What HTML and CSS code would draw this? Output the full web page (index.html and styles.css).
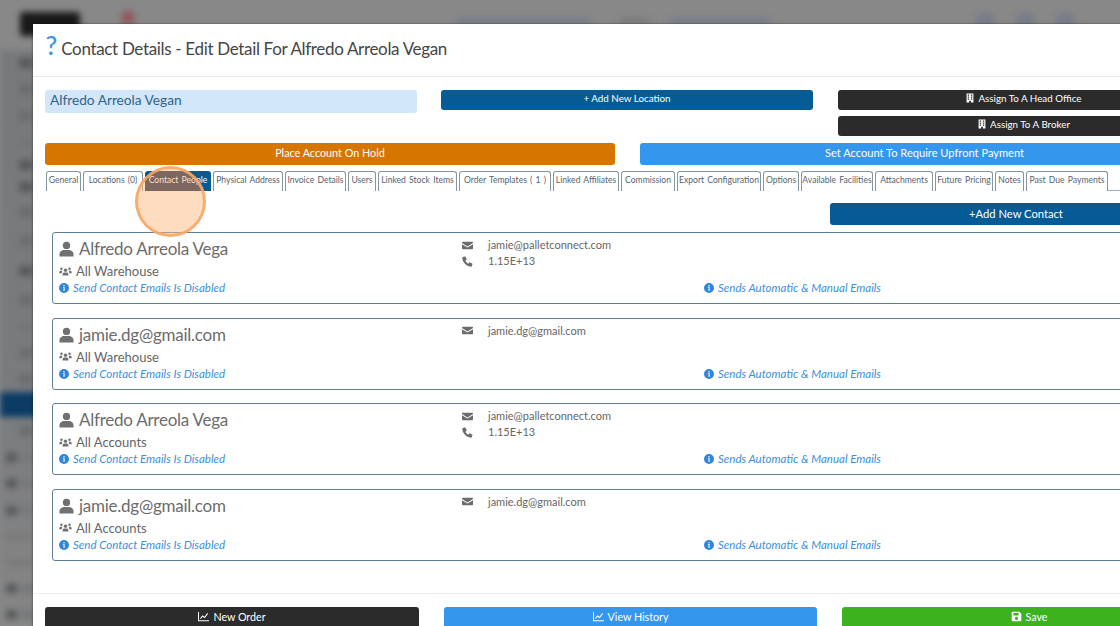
FILE: index.html
```html
<!DOCTYPE html>
<html lang="en">
<head>
<meta charset="utf-8">
<title>Contact Details</title>
<link rel="stylesheet" href="styles.css">
</head>
<body>
<svg width="0" height="0" class="defs">
  <symbol id="i-user" viewBox="0 0 16 16"><circle cx="8" cy="4.2" r="3.9"/><path d="M.5 16v-2.200C.5 10.700 3.100 9 5.500 9h5c2.400 0 5 1.700 5 4.800V16z"/></symbol>
  <symbol id="i-users" viewBox="0 0 20 16"><circle cx="10" cy="6" r="2.600"/><circle cx="3.800" cy="3.800" r="1.900"/><circle cx="16.200" cy="3.800" r="1.900"/><path d="M5.500 14v-1.500C5.500 10.500 7 9.500 8.500 9.500h3c1.500 0 3 1 3 3V14z"/><path d="M0.500 10.500V9c0-1.200 1-2.200 2.200-2.200h2.300C5 8 4.500 9 4.200 10.500zM19.500 10.500V9c0-1.200-1-2.200-2.200-2.200H15c0 1.200.5 2.200.8 3.700z"/></symbol>
  <symbol id="i-mail" viewBox="0 0 16 16"><path d="M1 2.500h14c.6 0 1 .4 1 1v.7L8 9.300 0 4.200v-.7c0-.6.400-1 1-1z"/><path d="M0 6l8 5 8-5v6.500c0 .6-.4 1-1 1H1c-.6 0-1-.4-1-1z"/></symbol>
  <symbol id="i-phone" viewBox="0 0 16 16"><path d="M3.800.7L1.300 1.500C.6 1.800.3 2.300.4 3c.6 6.500 5.800 11.900 12.500 12.600.7.100 1.200-.3 1.400-.9l.9-2.600c.2-.5 0-1-.5-1.300l-3-1.500c-.4-.2-.9-.1-1.200.3l-1.200 1.500C6.900 9.900 5.900 8.800 4.900 6.900l1.500-1.200c.4-.3.500-.8.300-1.200L5.100 1.200C4.800.7 4.300.5 3.800.7z"/></symbol>
  <symbol id="i-info" viewBox="0 0 16 16"><path fill-rule="evenodd" d="M8 0a8 8 0 1 1 0 16A8 8 0 0 1 8 0zM6.600 6.500v1.300h.8v3H6.500v1.300h3.200v-1.300h-.8V6.500zM8 3a1.200 1.200 0 1 0 0 2.400A1.200 1.200 0 0 0 8 3z"/></symbol>
  <symbol id="i-chart" viewBox="0 0 16 16"><path d="M0 1.500h1.500v11.800H16v1.500H0z"/><path d="M3 10.500l3.500-4.300 3 2.200L13.500 3l1.200 1-5 6.500-3-2.200-2.700 3.500z"/></symbol>
  <symbol id="i-building" viewBox="0 0 14 16"><path fill-rule="evenodd" d="M1 0h12v16H8.500v-3h-3v3H1zM3 2v2h2.500V2zm5.500 0v2H11V2zM3 5.500v2h2.500v-2zm5.500 0v2H11v-2zM3 9v2h2.500V9zm5.500 0v2H11V9z"/></symbol>
  <symbol id="i-save" viewBox="0 0 16 16"><path fill-rule="evenodd" d="M2 1h10l3 3v9.500c0 .8-.7 1.500-1.500 1.500h-11C1.700 15 1 14.300 1 13.500v-11C1 1.700 1.200 1 2 1zm1.500 2v3.500h7.500V3zM8 8.500a2.300 2.300 0 1 0 0 4.600 2.300 2.300 0 0 0 0-4.600z"/></symbol>
</svg>

<div class="backdrop">
  <div class="bd-top">
    <span class="bd-logo"></span><span class="bd-badge"></span>
    <span class="bd-crumb bd-c1"></span><span class="bd-crumb bd-c2"></span><span class="bd-crumb bd-c3"></span>
    <span class="bd-dot bd-d1"></span><span class="bd-dot"></span><span class="bd-dot"></span>
  </div>
  <div class="bd-side">
    <span class="bd-item bd-dark"></span><span class="bd-item"></span><span class="bd-item"></span><span class="bd-item bd-light"></span>
    <span class="bd-item bd-dark"></span><span class="bd-item bd-dark"></span><span class="bd-item"></span><span class="bd-item"></span>
    <span class="bd-item bd-dark"></span><span class="bd-item"></span><span class="bd-item bd-light"></span><span class="bd-item"></span>
    <span class="bd-item"></span>
    <span class="bd-active"></span>
    <span class="bd-item"></span>
    <span class="bd-sub bd-dark"></span><span class="bd-sub bd-dark"></span><span class="bd-sub bd-dark"></span>
    <span class="bd-sub bd-light"></span><span class="bd-sub bd-light"></span><span class="bd-sub bd-dark"></span><span class="bd-sub bd-dark"></span>
  </div>
</div>

<main class="modal">
  <header class="modal-head">
    <span class="q">?</span>
    <h1>Contact Details - Edit Detail For Alfredo Arreola Vegan</h1>
  </header>

  <section class="modal-body">
    <div class="top-row">
      <input class="name-input" type="text" value="Alfredo Arreola Vegan">
      <button class="btn navy small add-loc">+ Add New Location</button>
      <div class="assign">
        <button class="btn dark small"><svg class="ic-b"><use href="#i-building"/></svg> Assign To A Head Office</button>
        <button class="btn dark small"><svg class="ic-b"><use href="#i-building"/></svg> Assign To A Broker</button>
      </div>
    </div>

    <div class="hold-row">
      <button class="btn orange mid hold">Place Account On Hold</button>
      <button class="btn blue mid upfront">Set Account To Require Upfront Payment</button>
    </div>

    <nav class="tabs">
      <a class="tab">General</a>
      <a class="tab">Locations (0)</a>
      <a class="tab active">Contact People</a>
      <a class="tab">Physical Address</a>
      <a class="tab">Invoice Details</a>
      <a class="tab">Users</a>
      <a class="tab">Linked Stock Items</a>
      <a class="tab">Order Templates ( 1 )</a>
      <a class="tab">Linked Affiliates</a>
      <a class="tab">Commission</a>
      <a class="tab">Export Configuration</a>
      <a class="tab">Options</a>
      <a class="tab">Available Facilities</a>
      <a class="tab">Attachments</a>
      <a class="tab">Future Pricing</a>
      <a class="tab">Notes</a>
      <a class="tab">Past Due Payments</a>
      <span class="tab-rest"></span>
    </nav>

    <div class="add-row">
      <button class="btn navy mid add-contact">+Add New Contact</button>
    </div>

    <div class="cards">
      <article class="card">
        <div class="c-left">
          <div class="c-name"><svg class="ic-user"><use href="#i-user"/></svg>Alfredo Arreola Vega</div>
          <div class="c-group"><svg class="ic-users"><use href="#i-users"/></svg>All Warehouse</div>
        </div>
        <div class="c-mid">
          <div class="c-line"><svg class="ic-s"><use href="#i-mail"/></svg>jamie@palletconnect.com</div>
          <div class="c-line"><svg class="ic-s"><use href="#i-phone"/></svg>1.15E+13</div>
        </div>
        <div class="c-note c-note-l"><svg class="ic-i"><use href="#i-info"/></svg>Send Contact Emails Is Disabled</div>
        <div class="c-note c-note-r"><svg class="ic-i"><use href="#i-info"/></svg>Sends Automatic &amp; Manual Emails</div>
      </article>

      <article class="card">
        <div class="c-left">
          <div class="c-name"><svg class="ic-user"><use href="#i-user"/></svg>jamie.dg@gmail.com</div>
          <div class="c-group"><svg class="ic-users"><use href="#i-users"/></svg>All Warehouse</div>
        </div>
        <div class="c-mid">
          <div class="c-line"><svg class="ic-s"><use href="#i-mail"/></svg>jamie.dg@gmail.com</div>
        </div>
        <div class="c-note c-note-l"><svg class="ic-i"><use href="#i-info"/></svg>Send Contact Emails Is Disabled</div>
        <div class="c-note c-note-r"><svg class="ic-i"><use href="#i-info"/></svg>Sends Automatic &amp; Manual Emails</div>
      </article>

      <article class="card">
        <div class="c-left">
          <div class="c-name"><svg class="ic-user"><use href="#i-user"/></svg>Alfredo Arreola Vega</div>
          <div class="c-group"><svg class="ic-users"><use href="#i-users"/></svg>All Accounts</div>
        </div>
        <div class="c-mid">
          <div class="c-line"><svg class="ic-s"><use href="#i-mail"/></svg>jamie@palletconnect.com</div>
          <div class="c-line"><svg class="ic-s"><use href="#i-phone"/></svg>1.15E+13</div>
        </div>
        <div class="c-note c-note-l"><svg class="ic-i"><use href="#i-info"/></svg>Send Contact Emails Is Disabled</div>
        <div class="c-note c-note-r"><svg class="ic-i"><use href="#i-info"/></svg>Sends Automatic &amp; Manual Emails</div>
      </article>

      <article class="card">
        <div class="c-left">
          <div class="c-name"><svg class="ic-user"><use href="#i-user"/></svg>jamie.dg@gmail.com</div>
          <div class="c-group"><svg class="ic-users"><use href="#i-users"/></svg>All Accounts</div>
        </div>
        <div class="c-mid">
          <div class="c-line"><svg class="ic-s"><use href="#i-mail"/></svg>jamie.dg@gmail.com</div>
        </div>
        <div class="c-note c-note-l"><svg class="ic-i"><use href="#i-info"/></svg>Send Contact Emails Is Disabled</div>
        <div class="c-note c-note-r"><svg class="ic-i"><use href="#i-info"/></svg>Sends Automatic &amp; Manual Emails</div>
      </article>
    </div>
  </section>

  <footer class="modal-foot">
    <button class="btn dark mid f1"><svg class="ic-c"><use href="#i-chart"/></svg> New Order</button>
    <button class="btn blue mid f2"><svg class="ic-c"><use href="#i-chart"/></svg> View History</button>
    <button class="btn green mid f3"><svg class="ic-c"><use href="#i-save"/></svg> Save</button>
  </footer>
</main>

<div class="click-ring"></div>
</body>
</html>
```
FILE: styles.css
```css
* { box-sizing: border-box; }
html, body { margin: 0; height: 100%; overflow: hidden; }
body { width: 1120px; height: 626px; background: #888; font-family: "Lato", "Liberation Sans", sans-serif; color: #444; position: relative; }
.defs { position: absolute; }
svg { fill: currentColor; flex: none; }

.backdrop { position: absolute; inset: 0; filter: blur(3px); overflow: hidden; }
.bd-top { display: flex; align-items: flex-start; height: 62px; padding: 12px 0 0 20px; }
.bd-logo { width: 60px; height: 24px; background: #191919; border-radius: 3px; flex: none; }
.bd-badge { width: 14px; height: 16px; background: #8f5a5e; border-radius: 50%; margin: -2px 0 0 41px; flex: none; }
.bd-crumb { height: 7px; background: #747b8a; margin-top: 6px; flex: none; }
.bd-c1 { width: 133px; margin-left: 322px; }
.bd-c2 { width: 30px; margin-left: 30px; background: #7a7a7c; }
.bd-c3 { width: 100px; margin-left: 20px; }
.bd-dot { width: 20px; height: 22px; background: #777c88; border-radius: 50%; margin: 0 0 0 20px; flex: none; }
.bd-d1 { margin-left: 205px; }
.bd-side { display: grid; width: 60px; height: 580px; background: linear-gradient(#77797b 0, #7a7b7d 60%, #868686 100%); grid-template-rows: 26px 26.5px 26px 26.5px 20.5px 22px 28.5px 30px 30px 27.5px 26px 26px 26.5px 25px 27.5px 25.5px 26.5px 27px 26.5px 25.5px 26px 26.5px; align-items: center; margin-top: -12px; padding-left: 19px; }
.bd-item { display: block; height: 10px; width: 14px; background: #6a6c6e; }
.bd-dark { background: #56585a; }
.bd-light { background: #747678; }
.bd-active { display: block; height: 25px; width: 70px; margin-left: -19px; background: linear-gradient(90deg, #0b3c66 70%, #2d5c82 85%, #0b3c66 100%); }
.bd-sub { display: block; height: 9px; width: 34px; margin-left: -13px; }
.bd-sub.bd-dark { background: linear-gradient(90deg, #56585a 0 11px, transparent 11px 14px, #76787a 14px); }
.bd-sub.bd-light { background: #777; height: 5px; }

.modal { position: absolute; left: 32.5px; top: 24px; width: 1200px; height: 640px; background: #fff; display: flex; flex-direction: column; box-shadow: 0 0 2px rgba(0, 0, 0, .55); }
.modal-head { height: 53px; border-bottom: 1px solid #e9ecef; display: flex; align-items: center; padding: 0 0 3px 13px; gap: 4px; }
.q { color: #3f96e6; font-size: 26px; font-weight: 500; line-height: 1; margin-top: -7px; }
h1 { margin: 0; font-size: 17px; font-weight: 400; letter-spacing: -.33px; color: #454545; }
.modal-body { padding: 12.5px 0 0 12.5px; flex: 1; }

.btn { border: 0; border-radius: 3px; color: #fff; font-family: inherit; text-align: center; padding: 0 0 3px; display: flex; align-items: center; justify-content: center; gap: 4px; }
.small { height: 20px; font-size: 9.8px; }
.mid { height: 22px; font-size: 11.2px; padding-bottom: 2px; }
.navy { background: #055b96; }
.dark { background: #2b2b2b; }
.orange { background: #d67600; }
.blue { background: #3596ee; }
.green { background: #3cb21e; }

.top-row { display: flex; align-items: flex-start; }
.name-input { width: 372px; height: 23px; background: #d3e7fb; border: 0; border-radius: 3px; color: #2f6488; font: 13.7px "Lato", sans-serif; padding: 0 5px 3px; }
.add-loc { width: 372px; margin-left: 24px; }
.assign { width: 372px; margin-left: 25px; display: flex; flex-direction: column; gap: 6px; flex: none; }
.hold-row { display: flex; margin-top: 7px; gap: 25px; }
.hold { width: 570px; flex: none; font-size: 10.8px; padding-bottom: 3px; }
.upfront { width: 569px; flex: none; font-size: 11.1px; padding-bottom: 3px; }

.tabs { display: grid; grid-template-columns: 35px 60px 66px 70px 61px 28px 79px 92px 66px 54px 84px 36px 72px 58px 58px 29px 82px 1fr; column-gap: 2px; margin: 6px 0 0 1px; height: 20px; width: 1120px; }
.tab { height: 20px; border: 1px solid #83979f; border-bottom: 0; border-radius: 3px 3px 0 0; background: #fff; font-size: 8.6px; word-spacing: 1px; line-height: 16px; text-align: center; color: #55646f; white-space: nowrap; }
.tab.active { background: radial-gradient(circle 35px at 25px 30px, #001341 99%, #055b96 100%); color: #fff; border-color: transparent; background-origin: border-box; }
.tab-rest { border-bottom: 1px solid #9fb0bd; margin-left: -2px; }

.add-row { display: flex; margin-top: 12.5px; padding-left: 785px; }
.add-contact { width: 372px; flex: none; }

.cards { display: flex; flex-direction: column; gap: 13.5px; margin: 7px 0 0 7px; }
.card { position: relative; width: 1200px; height: 72px; border: 1px solid #5e7f96; border-radius: 3px; }
.c-left { padding: 4px 0 0 6px; }
.c-name { display: flex; align-items: center; gap: 5px; font-size: 17px; letter-spacing: -.25px; line-height: 24px; color: #6c6c6c; }
.ic-user { width: 15px; height: 16px; color: #707070; }
.c-group { display: flex; align-items: center; gap: 4px; font-size: 13px; line-height: 18px; color: #666; margin-top: 1px; }
.ic-users { width: 13px; height: 11px; color: #707070; }
.c-mid { position: absolute; left: 409px; top: 4px; }
.c-line { display: flex; align-items: center; font-size: 11px; line-height: 16px; color: #666; }
.ic-s { width: 11px; height: 11px; margin-right: 15px; color: #6c6c6c; }
.c-note { position: absolute; top: 48px; display: flex; align-items: center; gap: 4px; font-size: 11.5px; font-style: italic; line-height: 14px; color: #3d8fdb; }
.c-note-l { left: 6px; }
.c-note-r { left: 651px; }
.ic-i { width: 10px; height: 10px; color: #2f86da; }
.ic-b { width: 8px; height: 10px; }
.ic-c { width: 11px; height: 11px; }

.modal-foot { display: flex; gap: 25px; padding: 13px 0 0 12.5px; border-top: 1px solid #eceff1; height: 57px; position: absolute; top: 569px; left: 0; right: 0; }
.f1, .f2, .f3 { font-size: 10.7px; padding-bottom: 3px; flex: none; }
.f1 { width: 374px; }
.f2 { width: 373px; }
.f3 { width: 374px; }

.click-ring { position: absolute; left: 135px; top: 166px; width: 71px; height: 71px; border-radius: 50%; background: rgba(251, 185, 129, .5); border: 3px solid rgba(246, 168, 102, .9); }
```
